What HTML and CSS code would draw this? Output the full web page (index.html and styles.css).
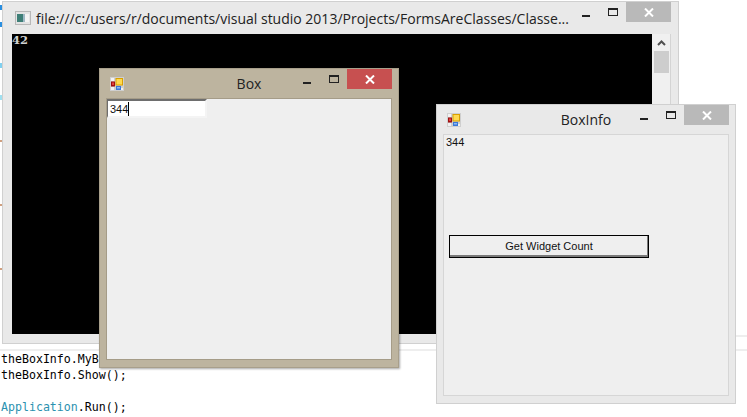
FILE: index.html
```
<!DOCTYPE html>
<html lang="en">
<head>
<meta charset="utf-8">
<title>FormsAreClasses</title>
<link rel="stylesheet" href="styles.css">
</head>
<body>
<svg width="0" height="0" class="defs">
  <symbol id="app" viewBox="0 0 14 14">
    <rect x="0" y="0" width="14" height="14" fill="#cfcfcf"/>
    <rect x="1" y="1" width="3" height="3" fill="#f2f2f2"/>
    <rect x="1" y="10" width="3" height="3" fill="#f2f2f2"/>
    <rect x="6" y="11" width="3" height="2" fill="#f2f2f2"/>
    <rect x="10" y="11" width="3" height="2" fill="#f2f2f2"/>
    <rect x="5.5" y="1" width="7.5" height="7.5" fill="#d9a000"/>
    <rect x="6.5" y="2" width="5.5" height="5.5" fill="#ffd94f"/>
    <rect x="1" y="4.5" width="4" height="5" fill="#a01010"/>
    <rect x="2" y="5.5" width="2" height="2.5" fill="#e04040"/>
    <rect x="6" y="9" width="5" height="4" fill="#3a78d8"/>
    <rect x="7" y="10" width="3" height="1.5" fill="#8fb8f0"/>
  </symbol>
  <symbol id="xmark" viewBox="0 0 10 9">
    <path d="M1 0.5 L9 8.5 M9 0.5 L1 8.5" stroke="#fff" stroke-width="2" fill="none"/>
  </symbol>
</svg>

<div class="ticks">
  <i class="tick tick-a"></i><i class="tick tick-b"></i><i class="tick tick-c"></i><i class="tick tick-d"></i>
  <i class="tick tick-e"></i><i class="tick tick-e"></i><i class="tick tick-e"></i>
</div>

<pre class="code"><span>theBoxInfo.MyBox = theBox;</span>
<span>theBoxInfo.Show();</span>

<span><span class="type">Application</span>.Run();</span></pre>

<div class="stripe stripe-top"></div>
<div class="stripe stripe-bottom"></div>

<section class="win console">
  <header class="titlebar">
    <svg class="console-icon" width="16" height="14" viewBox="0 0 16 14">
      <rect x="0.5" y="0.5" width="15" height="13" fill="#e4e4e4" stroke="#b8b8b8"/>
      <rect x="2" y="3" width="6" height="8" fill="#3e7f77"/>
      <rect x="8" y="3" width="2" height="8" fill="#9fb8c4"/>
      <rect x="10" y="3" width="4" height="8" fill="#f4f4f4"/>
    </svg>
    <span class="title-left">file:///c:/users/r/documents/visual studio 2013/Projects/FormsAreClasses/Classe...</span>
    <div class="caption">
      <i class="min"></i><i class="max"></i>
      <b class="close idle"><svg width="10" height="9"><use href="#xmark"/></svg></b>
    </div>
  </header>
  <div class="console-body">
    <div class="screen">42</div>
    <div class="scrollbar">
      <svg class="arrow" width="9" height="6" viewBox="0 0 9 6"><path d="M1 5 L4.5 1.5 L8 5" stroke="#505050" stroke-width="2" fill="none"/></svg>
      <div class="thumb"></div>
    </div>
  </div>
</section>

<section class="win form box">
  <header class="titlebar">
    <svg class="app-icon" width="14" height="14"><use href="#app"/></svg>
    <span class="title-center">Box</span>
    <div class="caption">
      <i class="min"></i><i class="max"></i>
      <b class="close hot"><svg width="10" height="9"><use href="#xmark"/></svg></b>
    </div>
  </header>
  <div class="client">
    <div class="textbox"><span>344</span><i class="cursor"></i></div>
  </div>
</section>

<section class="win form boxinfo">
  <header class="titlebar">
    <svg class="app-icon" width="14" height="14"><use href="#app"/></svg>
    <span class="title-center">BoxInfo</span>
    <div class="caption">
      <i class="min"></i><i class="max"></i>
      <b class="close idle"><svg width="10" height="9"><use href="#xmark"/></svg></b>
    </div>
  </header>
  <div class="client">
    <div class="label">344</div>
    <button class="button" type="button">Get Widget Count</button>
  </div>
</section>
</body>
</html>
```
FILE: styles.css
```
html, body {
  margin: 0;
  width: 747px;
  height: 417px;
  overflow: hidden;
  background: #fff;
}
body {
  position: relative;
  font-family: "Open Sans", "Liberation Sans", sans-serif;
}
.defs { position: absolute; }

/* editor behind the windows */
.ticks {
  position: absolute;
  left: 0;
  top: 0;
  width: 2px;
  height: 340px;
  display: flex;
  flex-direction: column;
}
.tick { display: block; width: 2px; height: 5px; margin-bottom: 12px; }
.tick-a { background: #2a8fe0; margin-top: 5px; }
.tick-b { background: #2a8fe0; }
.tick-c { background: #7fd0f0; margin-top: 24px; margin-bottom: 27px; }
.tick-d { background: #a0e0f0; margin-bottom: 40px; }
.tick-e { background: #d0a080; height: 2px; margin-bottom: 62px; }

.code {
  position: absolute;
  left: 1px;
  top: 351px;
  margin: 0;
  font-family: "DejaVu Sans Mono", "Liberation Mono", monospace;
  font-size: 11.6px;
  line-height: 16px;
  color: #000;
}
.type { color: #2b91af; }

.stripe {
  position: absolute;
  height: 2px;
  background: #eee;
}
.stripe-top { left: 736px; right: 0; top: 335px; }
.stripe-bottom { left: 0; right: 0; top: 349px; }

/* windows */
.win {
  position: absolute;
  box-sizing: border-box;
  display: flex;
  flex-direction: column;
  border: 1px solid #d0d0d0;
  background: #e9e9e9;
}
.titlebar {
  position: relative;
  flex: none;
  display: flex;
  align-items: center;
  height: 29px;
  color: #222;
}
.title-left { font-size: 14px; white-space: nowrap; }
.title-center {
  position: absolute;
  left: 0;
  right: 0;
  top: 5px;
  text-align: center;
  font-size: 14px;
  line-height: 20px;
}
.caption {
  position: absolute;
  top: 0;
  right: 6px;
  display: flex;
  align-items: flex-start;
}
.min {
  width: 8px;
  height: 2px;
  margin-top: 13px;
  background: #222;
}
.max {
  box-sizing: border-box;
  width: 10px;
  height: 8px;
  margin: 6px 8px 0 18px;
  border: 1px solid #222;
  border-top-width: 2px;
}
.close {
  width: 45px;
  height: 20px;
  display: flex;
  align-items: center;
  justify-content: center;
}
.close.idle { background: #b9b9b9; }
.close.hot { background: #c75050; }

/* console */
.console {
  left: 2px;
  top: 1px;
  width: 677px;
  height: 343px;
}
.console-icon { margin-left: 12px; flex: none; }
.console .titlebar { height: 32px; }
.console .title-left { margin-left: 5px; }
.console .caption { right: 7px; }
.console-body {
  flex: none;
  display: flex;
  height: 300px;
  margin-left: 9px;
  width: 658px;
  border-right: 1px solid #d4d4d4;
}
.screen {
  width: 640px;
  background: #000;
  color: #d0d0d0;
  font-family: "DejaVu Serif", "Liberation Mono", monospace;
  font-weight: 700;
  font-size: 11.5px;
  line-height: 13px;
  box-sizing: border-box;
}
.scrollbar {
  flex: 1;
  background: #f0f0f0;
  display: flex;
  flex-direction: column;
  align-items: center;
}
.arrow { margin-top: 6px; flex: none; }
.thumb {
  width: 15px;
  height: 22px;
  margin-top: 5px;
  background: #cdcdcd;
}

/* forms */
.form { width: 300px; height: 300px; }
.form .titlebar { height: 29px; }
.app-icon { margin-left: 10px; flex: none; }
.client {
  flex: 1;
  box-sizing: border-box;
  margin: 0 6px 7px;
  background: #efefef;
  border: 1px solid #d6d6d6;
  font-family: "Liberation Sans", sans-serif;
  font-size: 11px;
  color: #111;
}
.box {
  left: 99px;
  top: 68px;
  background: #bdb49f;
  border-color: #a89f8b;
  box-shadow: 1px 1px 2px rgba(0, 0, 0, 0.35);
}
.box .client { border-color: #a59c88; }
.textbox {
  box-sizing: border-box;
  display: flex;
  align-items: center;
  width: 100px;
  height: 19px;
  padding-left: 2px;
  background: #fff;
  border-style: solid;
  border-width: 2px 2px 2px 1px;
  border-color: #6e6e6e #f4f4f4 #f4f4f4 #6e6e6e;
  font-size: 11px;
}
.cursor { width: 1px; height: 14px; background: #000; }

.boxinfo { left: 436px; top: 104px; }
.label { margin: 1px 0 0 2px; line-height: 13px; }
.button {
  display: block;
  box-sizing: border-box;
  width: 200px;
  height: 23px;
  margin: 86px 0 0 5px;
  padding: 0 0 2px;
  background: #efefef;
  border: 1px solid #000;
  box-shadow: inset -1px -2px 0 #7a7a7a;
  font-family: "Liberation Sans", sans-serif;
  font-size: 11px;
  color: #111;
}
```
